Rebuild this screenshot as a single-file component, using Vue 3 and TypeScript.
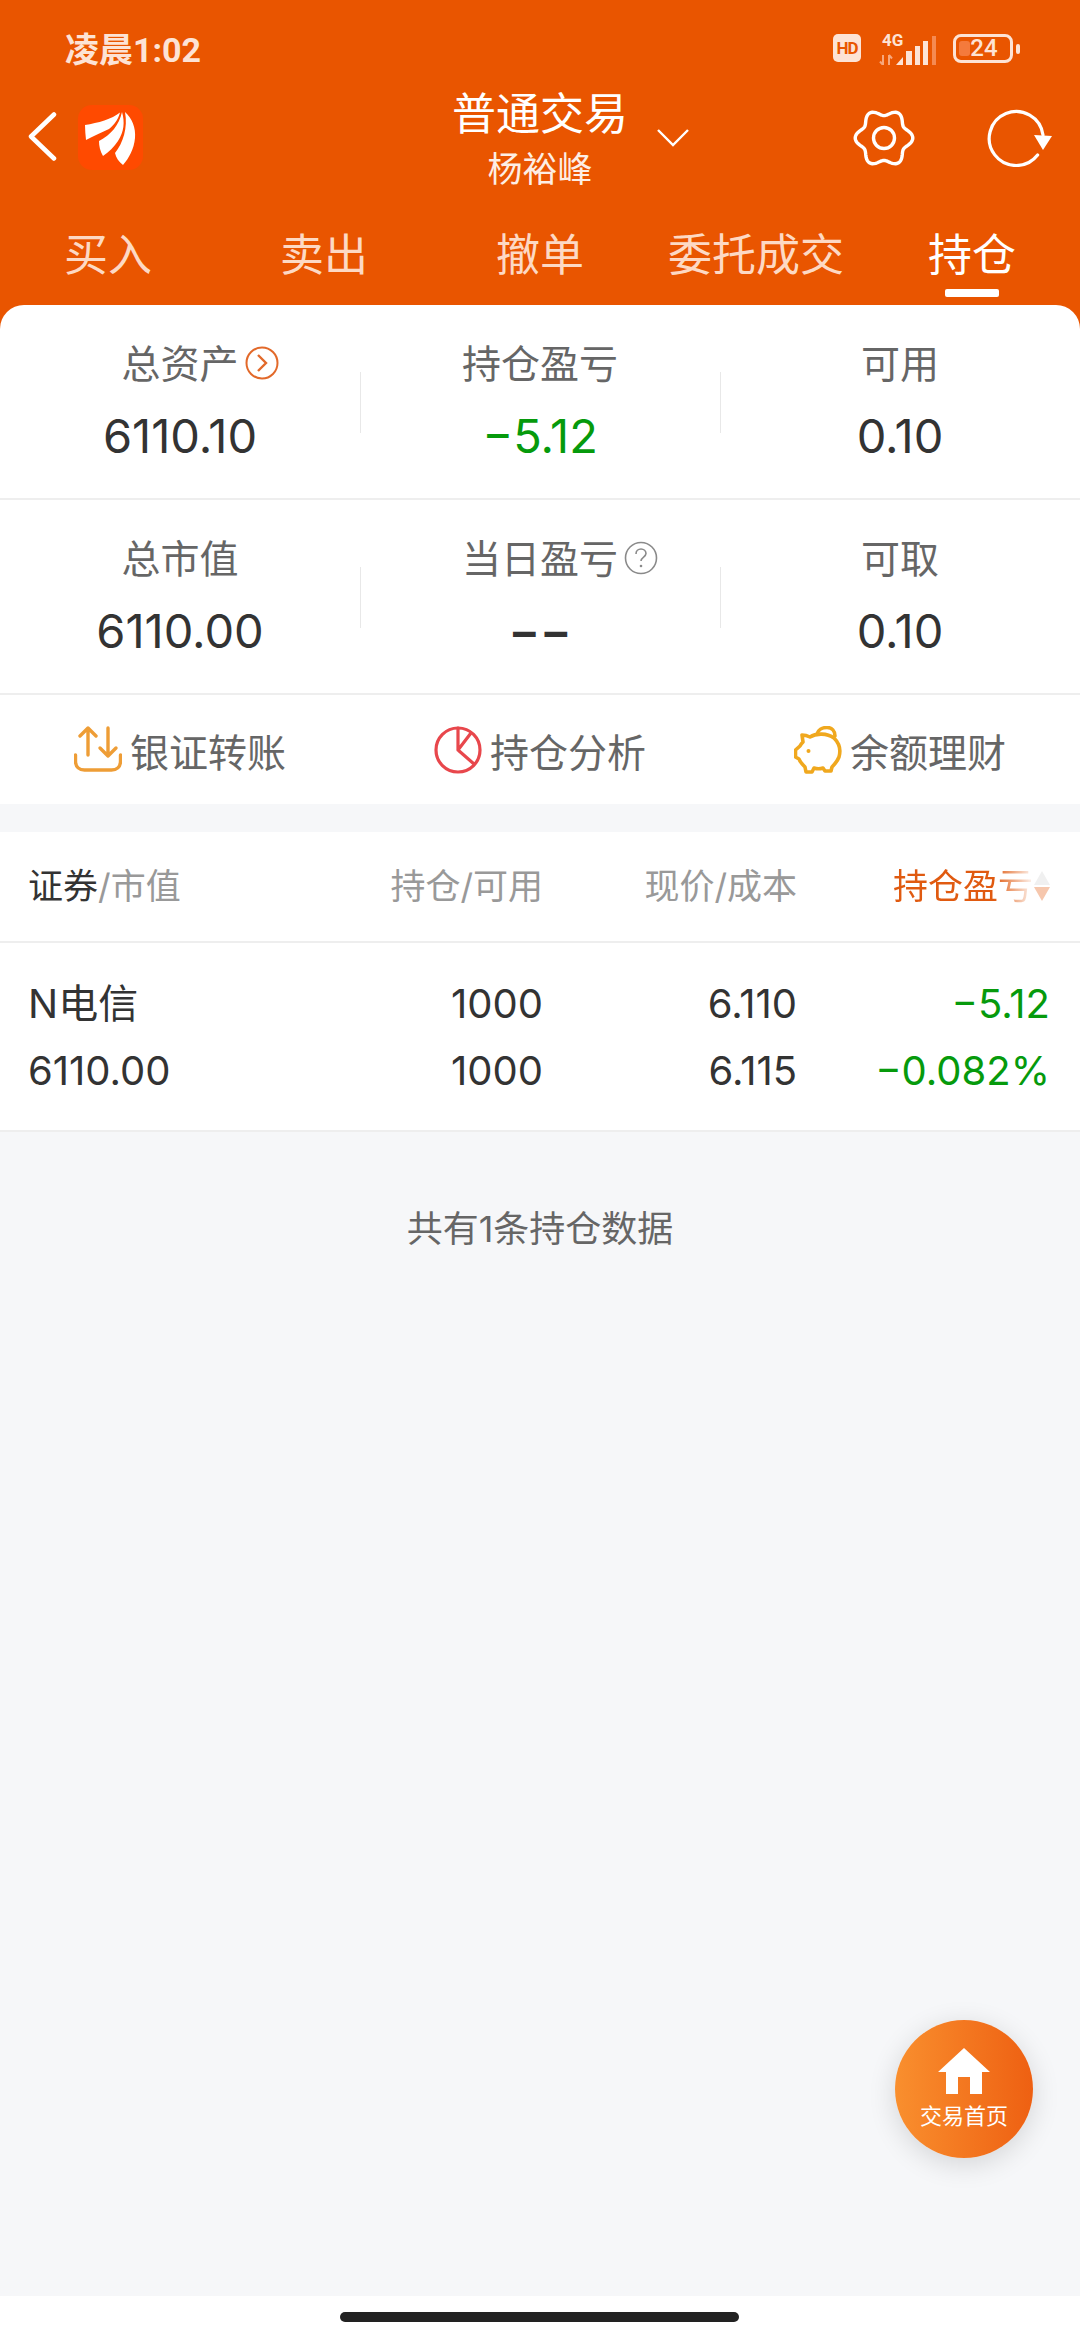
<script setup lang="ts">
const tabs = ['买入', '卖出', '撤单', '委托成交', '持仓']
const activeTab = '持仓'

const assets = [
  [
    { label: '总资产', value: '6110.10', hint: 'go' },
    { label: '持仓盈亏', value: '−5.12', tone: 'down' },
    { label: '可用', value: '0.10' },
  ],
  [
    { label: '总市值', value: '6110.00' },
    { label: '当日盈亏', value: '−−', hint: 'help', tone: 'empty' },
    { label: '可取', value: '0.10' },
  ],
]

// six soft lobes, same outline as the settings gear in the app
const gearPath = (() => {
  const pts: string[] = []
  for (let i = 0; i < 120; i++) {
    const a = (i / 120) * Math.PI * 2
    const r = 25.6 + 3.2 * Math.cos(6 * a)
    pts.push(`${(31 + r * Math.cos(a)).toFixed(2)} ${(31 + r * Math.sin(a)).toFixed(2)}`)
  }
  return 'M' + pts.join('L') + 'Z'
})()
</script>

<template>
  <div class="page">
    <header class="top">
      <div class="status">
        <span class="time">凌晨1:02</span>
        <div class="status-right">
          <span class="hd">HD</span>
          <svg class="signal" width="60" height="34" viewBox="0 -2 60 34">
            <text x="5" y="13" class="net">4G</text>
            <path d="M6 22v10M3 28.500 6 32M12 32V22M12 22l3 3.500" fill="none" stroke="#f7a77c" stroke-width="2" />
            <path d="M19 32l7-8v8z" fill="#fde3d5" />
            <rect x="29" y="18" width="6" height="14" fill="#fde3d5" />
            <rect x="38" y="13" width="5" height="19" fill="#fde3d5" />
            <rect x="46" y="8" width="5" height="24" fill="#fde3d5" />
            <rect x="55" y="3" width="4" height="29" fill="#f58a52" />
          </svg>
          <div class="battery">
            <span class="battery-level"></span>
            <span class="battery-num">24</span>
            <span class="battery-cap"></span>
          </div>
        </div>
      </div>

      <div class="nav">
        <svg class="back" width="30" height="52" viewBox="0 0 30 52">
          <path d="M27 3.500 4 25.500 27 47.500" fill="none" stroke="#fff" stroke-width="4.500" stroke-linecap="round" stroke-linejoin="round" />
        </svg>
        <div class="logo">
          <svg width="65" height="65" viewBox="0 0 65 65">
            <path d="M7 20C20 18 34 14 42 7.500 40 15 36 20 31 24 23 28 15 31 8 35 7.500 30 7 25 7 20Z" fill="#fff" />
            <path d="M44 7C47 17 46 27 40 36 36 42 31 47 25 51 22 46 21 41 21 36 33 30 41 20 44 7Z" fill="#fff" />
            <path d="M47 7C54 13 58 23 57 33 56 44 51 53 45 60 41 57 38 53 37 48 45 38 50 23 47 7Z" fill="#fff" />
          </svg>
        </div>
        <div class="title">
          <div class="title-main">普通交易</div>
          <div class="title-sub">杨裕峰</div>
        </div>
        <svg class="caret" width="34" height="19" viewBox="0 0 34 19">
          <path d="M2 2 17 17 32 2" fill="none" stroke="#fff" stroke-width="2.400" />
        </svg>
        <svg class="gear" width="62" height="62" viewBox="0 0 62 62">
          <path :d="gearPath" fill="none" stroke="#fff" stroke-width="3.400" stroke-linejoin="round" />
          <circle cx="31" cy="31" r="10.500" fill="none" stroke="#fff" stroke-width="3.400" />
        </svg>
        <svg class="refresh" width="66" height="60" viewBox="0 0 66 60">
          <path d="M50.600 48A27 27 0 1 1 56 28" fill="none" stroke="#fff" stroke-width="3.200" stroke-linecap="round" />
          <path d="M47 28 65 29 56 43Z" fill="#fff" />
        </svg>
      </div>

      <nav class="tabs">
        <div v-for="tab in tabs" :key="tab" class="tab" :class="{ active: tab === activeTab }">{{ tab }}</div>
      </nav>
    </header>

    <div class="summary-wrap">
      <section class="summary">
        <div v-for="(row, i) in assets" :key="i" class="stat-row">
          <div v-for="item in row" :key="item.label" class="stat">
            <div class="stat-label">
              {{ item.label }}
              <svg v-if="item.hint === 'go'" class="hint" width="34" height="34" viewBox="0 0 34 34">
                <circle cx="17" cy="17" r="15.500" fill="none" stroke="#e2692a" stroke-width="2" />
                <path d="M13 9l8 8-8 8" fill="none" stroke="#e2692a" stroke-width="2.400" />
              </svg>
              <svg v-if="item.hint === 'help'" class="hint" width="34" height="34" viewBox="0 0 34 34">
                <circle cx="17" cy="17" r="15.500" fill="none" stroke="#8a8a8a" stroke-width="1.600" />
                <path d="M12 13c0-3 2.200-5 5-5s5 2 5 4.600c0 3.400-5 3.600-5 7.400" fill="none" stroke="#8a8a8a" stroke-width="1.600" />
                <circle cx="17" cy="25" r="1.300" fill="#8a8a8a" />
              </svg>
            </div>
            <div class="stat-value" :class="item.tone">{{ item.value }}</div>
          </div>
        </div>

        <div class="actions">
          <div class="action">
            <svg width="48" height="48" viewBox="0 0 48 48">
              <g fill="none" stroke="#ee9d36" stroke-width="3.400" stroke-linecap="round" stroke-linejoin="round">
                <path d="M14 29V2M6 10l8-8 8 8" />
                <path d="M34 2v28M26 22l8 8 8-8" />
                <path d="M1.500 29v6c0 6 4 9 9 9h27c5 0 9-3 9-9v-6" />
              </g>
            </svg>
            <span>银证转账</span>
          </div>
          <div class="action">
            <svg width="48" height="48" viewBox="0 0 48 48">
              <g fill="none" stroke="#e8474c" stroke-width="3.200" stroke-linecap="round" stroke-linejoin="round">
                <circle cx="24" cy="24" r="22" />
                <path d="M24 2V24L37 7M24 24 40 38" />
              </g>
            </svg>
            <span>持仓分析</span>
          </div>
          <div class="action">
            <svg width="48" height="48" viewBox="0 0 48 48">
              <g fill="none" stroke="#f0a81e" stroke-width="3.600" stroke-linecap="round" stroke-linejoin="round">
                <path d="M23 8C24 4 28 1.500 33 1.500 38 1.500 41 5 41 10" />
                <path d="M8 9C12 9 14 10 16 11 22 7 33 7 40 12 45 17 47 24 45 31 43 36 40 39 38 41L37 45H31L29 42C26 43 23 43 20 42L18 46H12L11 41C8 38 6 36 5 33L1.500 31V24L6 20C7 18 8 17 9 16Z" />
              </g>
              <circle cx="14.500" cy="25" r="2" fill="#f0a81e" />
            </svg>
            <span>余额理财</span>
          </div>
        </div>
      </section>
    </div>

    <main class="main">
      <section class="holdings">
        <div class="grid head">
          <div class="cell-left"><span class="dark">证券</span>/市值</div>
          <div>持仓/可用</div>
          <div>现价/成本</div>
          <div class="sort">
            <span class="sort-text">持仓盈亏</span>
            <svg class="sort-arrows" width="16" height="30" viewBox="0 0 16 30">
              <path d="M8 0 16 14H0Z" fill="#f0f0f0" />
              <path d="M8 30 16 16H0Z" fill="#f6c7ad" />
            </svg>
          </div>
        </div>
        <div class="grid row">
          <div class="cell-left">
            <div>N电信</div>
            <div>6110.00</div>
          </div>
          <div>
            <div>1000</div>
            <div>1000</div>
          </div>
          <div>
            <div>6.110</div>
            <div>6.115</div>
          </div>
          <div class="down">
            <div>−5.12</div>
            <div>−0.082%</div>
          </div>
        </div>
      </section>
      <p class="count">共有1条持仓数据</p>
    </main>

    <div class="home-bar"><span></span></div>

    <div class="fab">
      <svg width="54" height="46" viewBox="0 0 54 46">
        <path d="M27 0 53 24H45V46H33V29H21V46H9V24H1Z" fill="#fff" />
      </svg>
      <span>交易首页</span>
    </div>
  </div>
</template>

<style scoped>
.page {
  position: relative;
  width: 1080px;
  height: 2340px;
  display: flex;
  flex-direction: column;
  background: #f6f7f9;
  color: #333;
  font-family: Inter, 'Noto Sans CJK SC', sans-serif;
  overflow: hidden;
}

.top {
  height: 305px;
  background: #e95500;
  color: #fff;
  flex: none;
}

.status {
  height: 94px;
  display: flex;
  align-items: center;
  justify-content: space-between;
  padding: 0 60px 0 65px;
  font-family: Roboto, 'Noto Sans CJK SC', sans-serif;
}

.time {
  font-size: 34px;
  font-weight: 700;
  color: #fde3d5;
}

.status-right {
  display: flex;
  align-items: center;
  gap: 16px;
  padding-top: 2px;
}

.hd {
  width: 28px;
  height: 28px;
  border-radius: 5px;
  background: #fde3d5;
  color: #e95500;
  font-size: 17px;
  font-weight: 700;
  line-height: 28px;
  text-align: center;
  letter-spacing: -1px;
}

.net {
  font-size: 17px;
  font-weight: 700;
  fill: #fde3d5;
}

.battery {
  position: relative;
  width: 60px;
  height: 29px;
  margin-right: 7px;
  border: 3px solid #fde3d5;
  border-radius: 8px;
  box-sizing: border-box;
  display: flex;
  align-items: center;
  justify-content: center;
}

.battery-level {
  position: absolute;
  left: 3px;
  top: 4px;
  width: 11px;
  height: 15px;
  border-radius: 3px;
  background: #f47a3c;
}

.battery-num {
  position: relative;
  padding-left: 2px;
  font-size: 24px;
  font-weight: 500;
  line-height: 1;
  color: #fde3d5;
}

.battery-cap {
  position: absolute;
  right: -10px;
  top: 7px;
  width: 4px;
  height: 10px;
  border-radius: 2px;
  background: #fde3d5;
}

.nav {
  position: relative;
  height: 101px;
  display: flex;
}

.back {
  position: absolute;
  left: 27px;
  top: 17px;
}

.logo {
  position: absolute;
  left: 78px;
  top: 11px;
  width: 65px;
  height: 65px;
  border-radius: 14px;
  background: #ff4a00;
}

.logo svg {
  display: block;
}

.title {
  width: 100%;
  text-align: center;
  margin-top: -10px;
}

.title-main {
  font-size: 44px;
  line-height: 61px;
}

.title-sub {
  font-size: 35px;
  line-height: 48px;
  color: #fdeee5;
}

.caret {
  position: absolute;
  left: 656px;
  top: 34px;
}

.gear {
  position: absolute;
  left: 853px;
  top: 13px;
}

.refresh {
  position: absolute;
  left: 987px;
  top: 13px;
}

.tabs {
  height: 110px;
  display: grid;
  grid-template-columns: repeat(5, 1fr);
  grid-template-rows: 110px;
}

.tab {
  position: relative;
  text-align: center;
  font-size: 44px;
  line-height: 120px;
  color: #fdd9c4;
}

.tab.active {
  color: #fff;
}

.tab.active::after {
  content: '';
  position: absolute;
  left: 50%;
  bottom: 8px;
  width: 54px;
  height: 8px;
  margin-left: -27px;
  border-radius: 2px;
  background: #fff;
}

.summary-wrap {
  flex: none;
  background: #e95500;
}

.summary {
  background: #fff;
  border-radius: 24px 24px 0 0;
}

.stat-row {
  height: 195px;
  box-sizing: border-box;
  display: grid;
  grid-template-columns: repeat(3, 1fr);
  border-bottom: 2px solid #eeeeee;
}

.stat {
  position: relative;
  text-align: center;
  padding-top: 34px;
}

.stat + .stat::before {
  content: '';
  position: absolute;
  left: 0;
  top: 67px;
  width: 1px;
  height: 61px;
  background: #e8e8e8;
}

.stat-label {
  position: relative;
  font-size: 39px;
  line-height: 50px;
  color: #666;
}

.hint {
  position: absolute;
  margin-left: 6px;
  top: 7px;
}

.stat-value {
  margin-top: 19px;
  font-size: 47px;
  line-height: 56px;
  color: #333;
}

.stat-value.empty {
  font-weight: 600;
}

.down {
  color: #069a0c !important;
}

.actions {
  height: 109px;
  display: grid;
  grid-template-columns: repeat(3, 1fr);
  align-items: center;
}

.action {
  display: flex;
  align-items: center;
  justify-content: center;
  gap: 8px;
  font-size: 39px;
  color: #666;
}

.main {
  flex: 1;
  padding-top: 28px;
}

.holdings {
  background: #fff;
  border-bottom: 2px solid #eeeeee;
}

.grid {
  display: grid;
  grid-template-columns: 342px 173px 254px 253px;
  padding: 0 29px 0 28px;
  text-align: right;
}

.cell-left {
  text-align: left;
}

.head {
  height: 111px;
  align-items: center;
  border-bottom: 2px solid #eeeeee;
  font-size: 35px;
  line-height: 50px;
  padding-bottom: 1px;
  box-sizing: border-box;
  color: #999;
}

.dark {
  color: #333;
}

.sort {
  position: relative;
  padding-right: 17px;
}

.sort-text {
  background: linear-gradient(to right, #e05a10 72%, rgba(224, 90, 16, 0.12) 98%);
  -webkit-background-clip: text;
  background-clip: text;
  color: transparent;
}

.sort-arrows {
  position: absolute;
  right: 0;
  top: 10px;
}

.row {
  height: 187px;
  align-content: center;
  font-size: 40px;
  line-height: 67px;
  color: #333;
  padding-top: 1px;
  box-sizing: border-box;
}

.count {
  margin: 72px 0 0;
  text-align: center;
  font-size: 36px;
  line-height: 50px;
  color: #666;
}

.home-bar {
  flex: none;
  height: 44px;
  background: #fff;
  position: relative;
}

.home-bar span {
  position: absolute;
  left: 340px;
  top: 16px;
  width: 399px;
  height: 10px;
  border-radius: 5px;
  background: #222;
}

.fab {
  position: absolute;
  right: 47px;
  bottom: 182px;
  width: 138px;
  height: 138px;
  border-radius: 50%;
  background: linear-gradient(to right, #f98f2e, #ee6012);
  box-shadow: 0 6px 28px rgba(0, 0, 0, 0.14);
  display: flex;
  flex-direction: column;
  align-items: center;
  padding-top: 28px;
  box-sizing: border-box;
  color: #fff;
  font-size: 22px;
}

.fab span {
  margin-top: 7px;
  line-height: 30px;
}
</style>
